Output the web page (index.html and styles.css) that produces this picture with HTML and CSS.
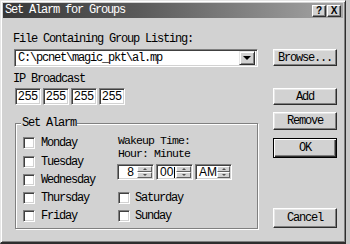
FILE: index.html
```html
<!DOCTYPE html>
<html lang="en">
<head>
  <meta charset="UTF-8" />
  <title>Set Alarm for Groups</title>
  <link rel="stylesheet" href="styles.css">
</head>
<body>

<div class="window">
  <div class="titlebar">
    <span class="title">Set Alarm for Groups</span>
    <span class="tbtn">?</span>
    <span class="tbtn">X</span>
  </div>

  <div class="main">
    <div class="left">
      <div class="label">File Containing Group Listing:</div>
      <div class="combo">
        <span class="combo-text">C:\pcnet\magic_pkt\al.mp</span>
        <span class="combo-btn"><i class="arrow-down"></i></span>
      </div>

      <div class="label ip-label">IP Broadcast</div>
      <div class="ip-row">
        <span class="ip">255</span>
        <span class="ip">255</span>
        <span class="ip">255</span>
        <span class="ip">255</span>
      </div>

      <div class="group">
        <span class="legend">Set Alarm</span>
        <div class="group-grid">
          <label class="check c1 r1"><span class="box"></span>Monday</label>
          <label class="check c1 r2"><span class="box"></span>Tuesday</label>
          <label class="check c1 r3"><span class="box"></span>Wednesday</label>
          <label class="check c1 r4"><span class="box"></span>Thursday</label>
          <label class="check c1 r5"><span class="box"></span>Friday</label>

          <div class="wakeup">
            <div class="wline">Wakeup Time:</div>
            <div class="wline">Hour: Minute</div>
            <div class="spins">
              <div class="spin">
                <span class="spin-text align-end">8</span>
                <span class="spin-btns"><i class="sb"><i class="arrow-up"></i></i><i class="sb"><i class="arrow-dn"></i></i></span>
              </div>
              <div class="spin">
                <span class="spin-text">00<i class="caret"></i></span>
                <span class="spin-btns"><i class="sb"><i class="arrow-up"></i></i><i class="sb"><i class="arrow-dn"></i></i></span>
              </div>
              <div class="spin">
                <span class="spin-text">AM</span>
                <span class="spin-btns"><i class="sb"><i class="arrow-up"></i></i><i class="sb"><i class="arrow-dn"></i></i></span>
              </div>
            </div>
          </div>

          <label class="check c2 r4"><span class="box"></span>Saturday</label>
          <label class="check c2 r5"><span class="box"></span>Sunday</label>
        </div>
      </div>
    </div>

    <div class="side">
      <button class="btn b-browse">Browse...</button>
      <button class="btn b-add">Add</button>
      <button class="btn b-remove">Remove</button>
      <button class="btn b-ok">OK</button>
      <button class="btn b-cancel">Cancel</button>
    </div>
  </div>
</div>

</body>
</html>
```

FILE: styles.css
```css
* { box-sizing: border-box; }
body {
  margin: 0;
  background: #c8c8c8;
  font-family: "Liberation Mono", monospace;
  font-size: 12px;
  letter-spacing: -1.2px;
  color: #000;
}
.window {
  width: 346px;
  height: 244px;
  background: #d2d2d2;
  border-top: 1px solid #e6e6e6;
  border-left: 1px solid #e6e6e6;
  border-right: 1px solid #2e2e2e;
  border-bottom: 2px solid #2e2e2e;
  box-shadow: inset 1px 1px #fff, inset -1px -1px #808080;
  padding: 2px;
}
.titlebar {
  height: 15px;
  display: flex;
  align-items: center;
  padding-left: 2px;
  background: linear-gradient(to right, #383838, #5a5a5a 40%, #a6a6a6);
}
.title {
  color: #fff;
  line-height: 15px;
  flex: 1;
}
.tbtn {
  width: 14px;
  height: 12px;
  margin-left: 1px;
  background: #d2d2d2;
  border-top: 1px solid #fff;
  border-left: 1px solid #fff;
  border-right: 1px solid #303030;
  border-bottom: 1px solid #303030;
  box-shadow: inset -1px -1px #808080;
  font-family: "Liberation Sans", sans-serif;
  font-weight: bold;
  font-size: 10px;
  letter-spacing: 0;
  line-height: 10px;
  text-align: center;
}
.tbtn:last-child { margin-right: 2px; }

.main { display: flex; }
.left {
  width: 255px;
  padding-left: 10px;
  padding-top: 15px;
}
.label {
  height: 12px;
  line-height: 12px;
  white-space: nowrap;
}
.combo {
  margin-top: 4px;
  margin-left: 1px;
  width: 244px;
  height: 18px;
  display: flex;
  background: #fff;
  border-top: 1px solid #808080;
  border-left: 1px solid #808080;
  border-right: 1px solid #fff;
  border-bottom: 1px solid #fff;
  box-shadow: inset 1px 1px #404040, inset -1px -1px #d2d2d2;
  padding: 2px 2px 2px 3px;
}
.combo-text {
  flex: 1;
  line-height: 12px;
  white-space: nowrap;
}
.combo-btn {
  width: 16px;
  height: 14px;
  margin-top: -1px;
  background: #d2d2d2;
  border-top: 1px solid #e6e6e6;
  border-left: 1px solid #e6e6e6;
  border-right: 1px solid #303030;
  border-bottom: 1px solid #303030;
  box-shadow: inset 1px 1px #fff, inset -1px -1px #808080;
  display: flex;
  align-items: center;
  justify-content: center;
}
.arrow-down {
  width: 0;
  height: 0;
  border-left: 4px solid transparent;
  border-right: 4px solid transparent;
  border-top: 4px solid #000;
}
.ip-label { margin-top: 6px; }
.ip-row {
  margin-top: 3px;
  margin-left: 2px;
  display: flex;
  gap: 2px;
}
.ip {
  width: 26px;
  height: 17px;
  background: #fff;
  border-top: 1px solid #808080;
  border-left: 1px solid #808080;
  border-right: 1px solid #fff;
  border-bottom: 1px solid #fff;
  box-shadow: inset 1px 1px #404040, inset -1px -1px #d2d2d2;
  font-family: "Liberation Sans", sans-serif;
  font-size: 12px;
  letter-spacing: 0;
  line-height: 15px;
  padding-left: 2px;
}
.group {
  position: relative;
  margin-top: 18px;
  margin-left: 2px;
  width: 243px;
  height: 106px;
  border: 1px solid #808080;
  box-shadow: inset 1px 1px #fff, 1px 1px #fff;
  padding: 10px 0 0 7px;
}
.legend {
  position: absolute;
  top: -7px;
  left: 5px;
  padding: 0 1px;
  background: #d2d2d2;
  line-height: 12px;
}
.group-grid {
  display: grid;
  grid-template-columns: 95px 1fr;
  grid-template-rows: 18px 19px 18px 18px 18px;
}
.check {
  display: flex;
  align-items: center;
  gap: 5px;
  white-space: nowrap;
}
.c1 { grid-column: 1; }
.c2 { grid-column: 2; }
.r1 { grid-row: 1; }
.r2 { grid-row: 2; }
.r3 { grid-row: 3; }
.r4 { grid-row: 4; }
.r5 { grid-row: 5; }
.box {
  width: 12px;
  height: 12px;
  background: #fff;
  border-top: 1px solid #808080;
  border-left: 1px solid #808080;
  border-right: 1px solid #fff;
  border-bottom: 1px solid #fff;
  box-shadow: inset 1px 1px #404040, inset -1px -1px #d2d2d2;
  flex: none;
}
.c1 .box { margin-right: 1px; }
.wakeup {
  grid-column: 2;
  grid-row: 1 / span 3;
}
.wline {
  height: 13px;
  line-height: 13px;
  font-size: 11.5px;
  letter-spacing: -0.9px;
  white-space: nowrap;
}
.spins {
  margin-top: 4px;
  margin-left: -1px;
  display: flex;
  gap: 2px;
}
.spin {
  width: 37px;
  height: 16px;
  display: flex;
  background: #fff;
  border-top: 1px solid #808080;
  border-left: 1px solid #808080;
  border-right: 1px solid #fff;
  border-bottom: 1px solid #fff;
  box-shadow: inset 1px 1px #404040, inset -1px -1px #d2d2d2;
  padding: 1px;
}
.spin-text {
  flex: 1;
  font-family: "Liberation Sans", sans-serif;
  font-size: 12px;
  letter-spacing: 0;
  line-height: 12px;
  padding-left: 2px;
  display: flex;
  align-items: center;
}
.spin-text.align-end {
  justify-content: flex-end;
  padding-right: 3px;
}
.caret {
  width: 1px;
  height: 11px;
  background: #000;
  margin-left: 1px;
}
.spin-btns {
  width: 15px;
  display: flex;
  flex-direction: column;
}
.sb {
  flex: 1;
  background: #d2d2d2;
  border-top: 1px solid #fff;
  border-left: 1px solid #fff;
  border-right: 1px solid #606060;
  border-bottom: 1px solid #606060;
  display: flex;
  align-items: center;
  justify-content: center;
}
.arrow-up, .arrow-dn {
  width: 0;
  height: 0;
  border-left: 2px solid transparent;
  border-right: 2px solid transparent;
}
.arrow-up { border-bottom: 2px solid #505050; }
.arrow-dn { border-top: 2px solid #505050; }

.side {
  display: flex;
  flex-direction: column;
  padding-top: 31px;
  margin-left: 15px;
}
.btn {
  width: 64px;
  padding: 0;
  font-family: "Liberation Mono", monospace;
  font-size: 12px;
  letter-spacing: -1.2px;
  color: #000;
  background: #d2d2d2;
  border-top: 1px solid #fff;
  border-left: 1px solid #fff;
  border-right: 1px solid #2e2e2e;
  border-bottom: 1px solid #2e2e2e;
  box-shadow: inset -1px -1px #808080, inset 1px 1px #e6e6e6;
  line-height: 12px;
}
.b-browse { height: 17px; }
.b-add { height: 17px; margin-top: 22px; }
.b-remove { height: 18px; margin-top: 7px; }
.b-ok {
  height: 20px;
  margin-top: 8px;
  border: 1px solid #000;
  box-shadow: inset 1px 1px #fff, inset -1px -1px #2e2e2e, inset -2px -2px #808080;
}
.b-cancel { height: 20px; margin-top: 50px; }
```
